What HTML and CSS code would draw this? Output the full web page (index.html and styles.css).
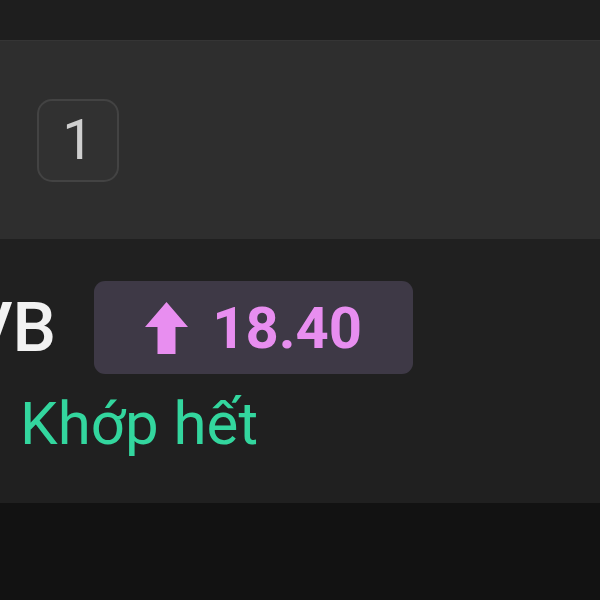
FILE: index.html
```html
<!DOCTYPE html>
<html lang="vi">
<head>
    <meta charset="UTF-8">
    <meta name="viewport" content="width=device-width, initial-scale=1.0">
    <title>Lệnh đặt</title>
    <link rel="stylesheet" href="styles.css">
</head>
<body>
    <div class="top-bar"></div>

    <div class="step-panel">
        <div class="step-box">1</div>
    </div>

    <div class="order-row">
        <div class="order-head">
            <span class="symbol">VB</span>
            <div class="price-badge">
                <svg class="arrow-up" width="43" height="52" viewBox="0 0 43 52">
                    <path d="M21.5 0 L43 25 L30.5 25 L30.5 52 L12.5 52 L12.5 25 L0 25 Z" fill="#e88ef0"/>
                </svg>
                <span class="price">18.40</span>
            </div>
        </div>
        <div class="order-status">Khớp hết</div>
    </div>
</body>
</html>
```

FILE: styles.css
```css
body {
    margin: 0;
    background-color: #121212;
    font-family: Roboto, "Liberation Sans", sans-serif;
    overflow: hidden;
}

.top-bar {
    height: 40px;
    background-color: #1e1e1e;
    border-bottom: 1px solid #353535;
}

/* grey panel with the step number */
.step-panel {
    height: 198px;
    background-color: #2e2e2e;
    display: flex;
    align-items: center;
    padding-left: 37px;
}

.step-box {
    width: 78px;
    height: 79px;
    border: 2px solid #434343;
    border-radius: 15px;
    background-color: #313131;
    color: #cfcfcf;
    font-size: 56px;
    display: flex;
    align-items: center;
    justify-content: center;
}

.order-row {
    height: 264px;
    box-sizing: border-box;
    background-color: #202020;
    padding-top: 42px;
}

.order-head {
    display: flex;
    align-items: center;
    margin-left: -32px;
}

.symbol {
    color: #f2f2f2;
    font-size: 69px;
    font-weight: 500;
    line-height: 1;
    margin-right: 38px;
}

.price-badge {
    width: 319px;
    height: 93px;
    box-sizing: border-box;
    background-color: #3e3946;
    border-radius: 11px;
    display: flex;
    align-items: center;
    justify-content: center;
    gap: 24px;
}

.price {
    color: #e88ef0;
    font-size: 58px;
    font-weight: 700;
    line-height: 1;
}

.order-status {
    color: #33d69e;
    font-size: 60px;
    line-height: 1;
    margin: 20px 0 0 20px;
}
```
